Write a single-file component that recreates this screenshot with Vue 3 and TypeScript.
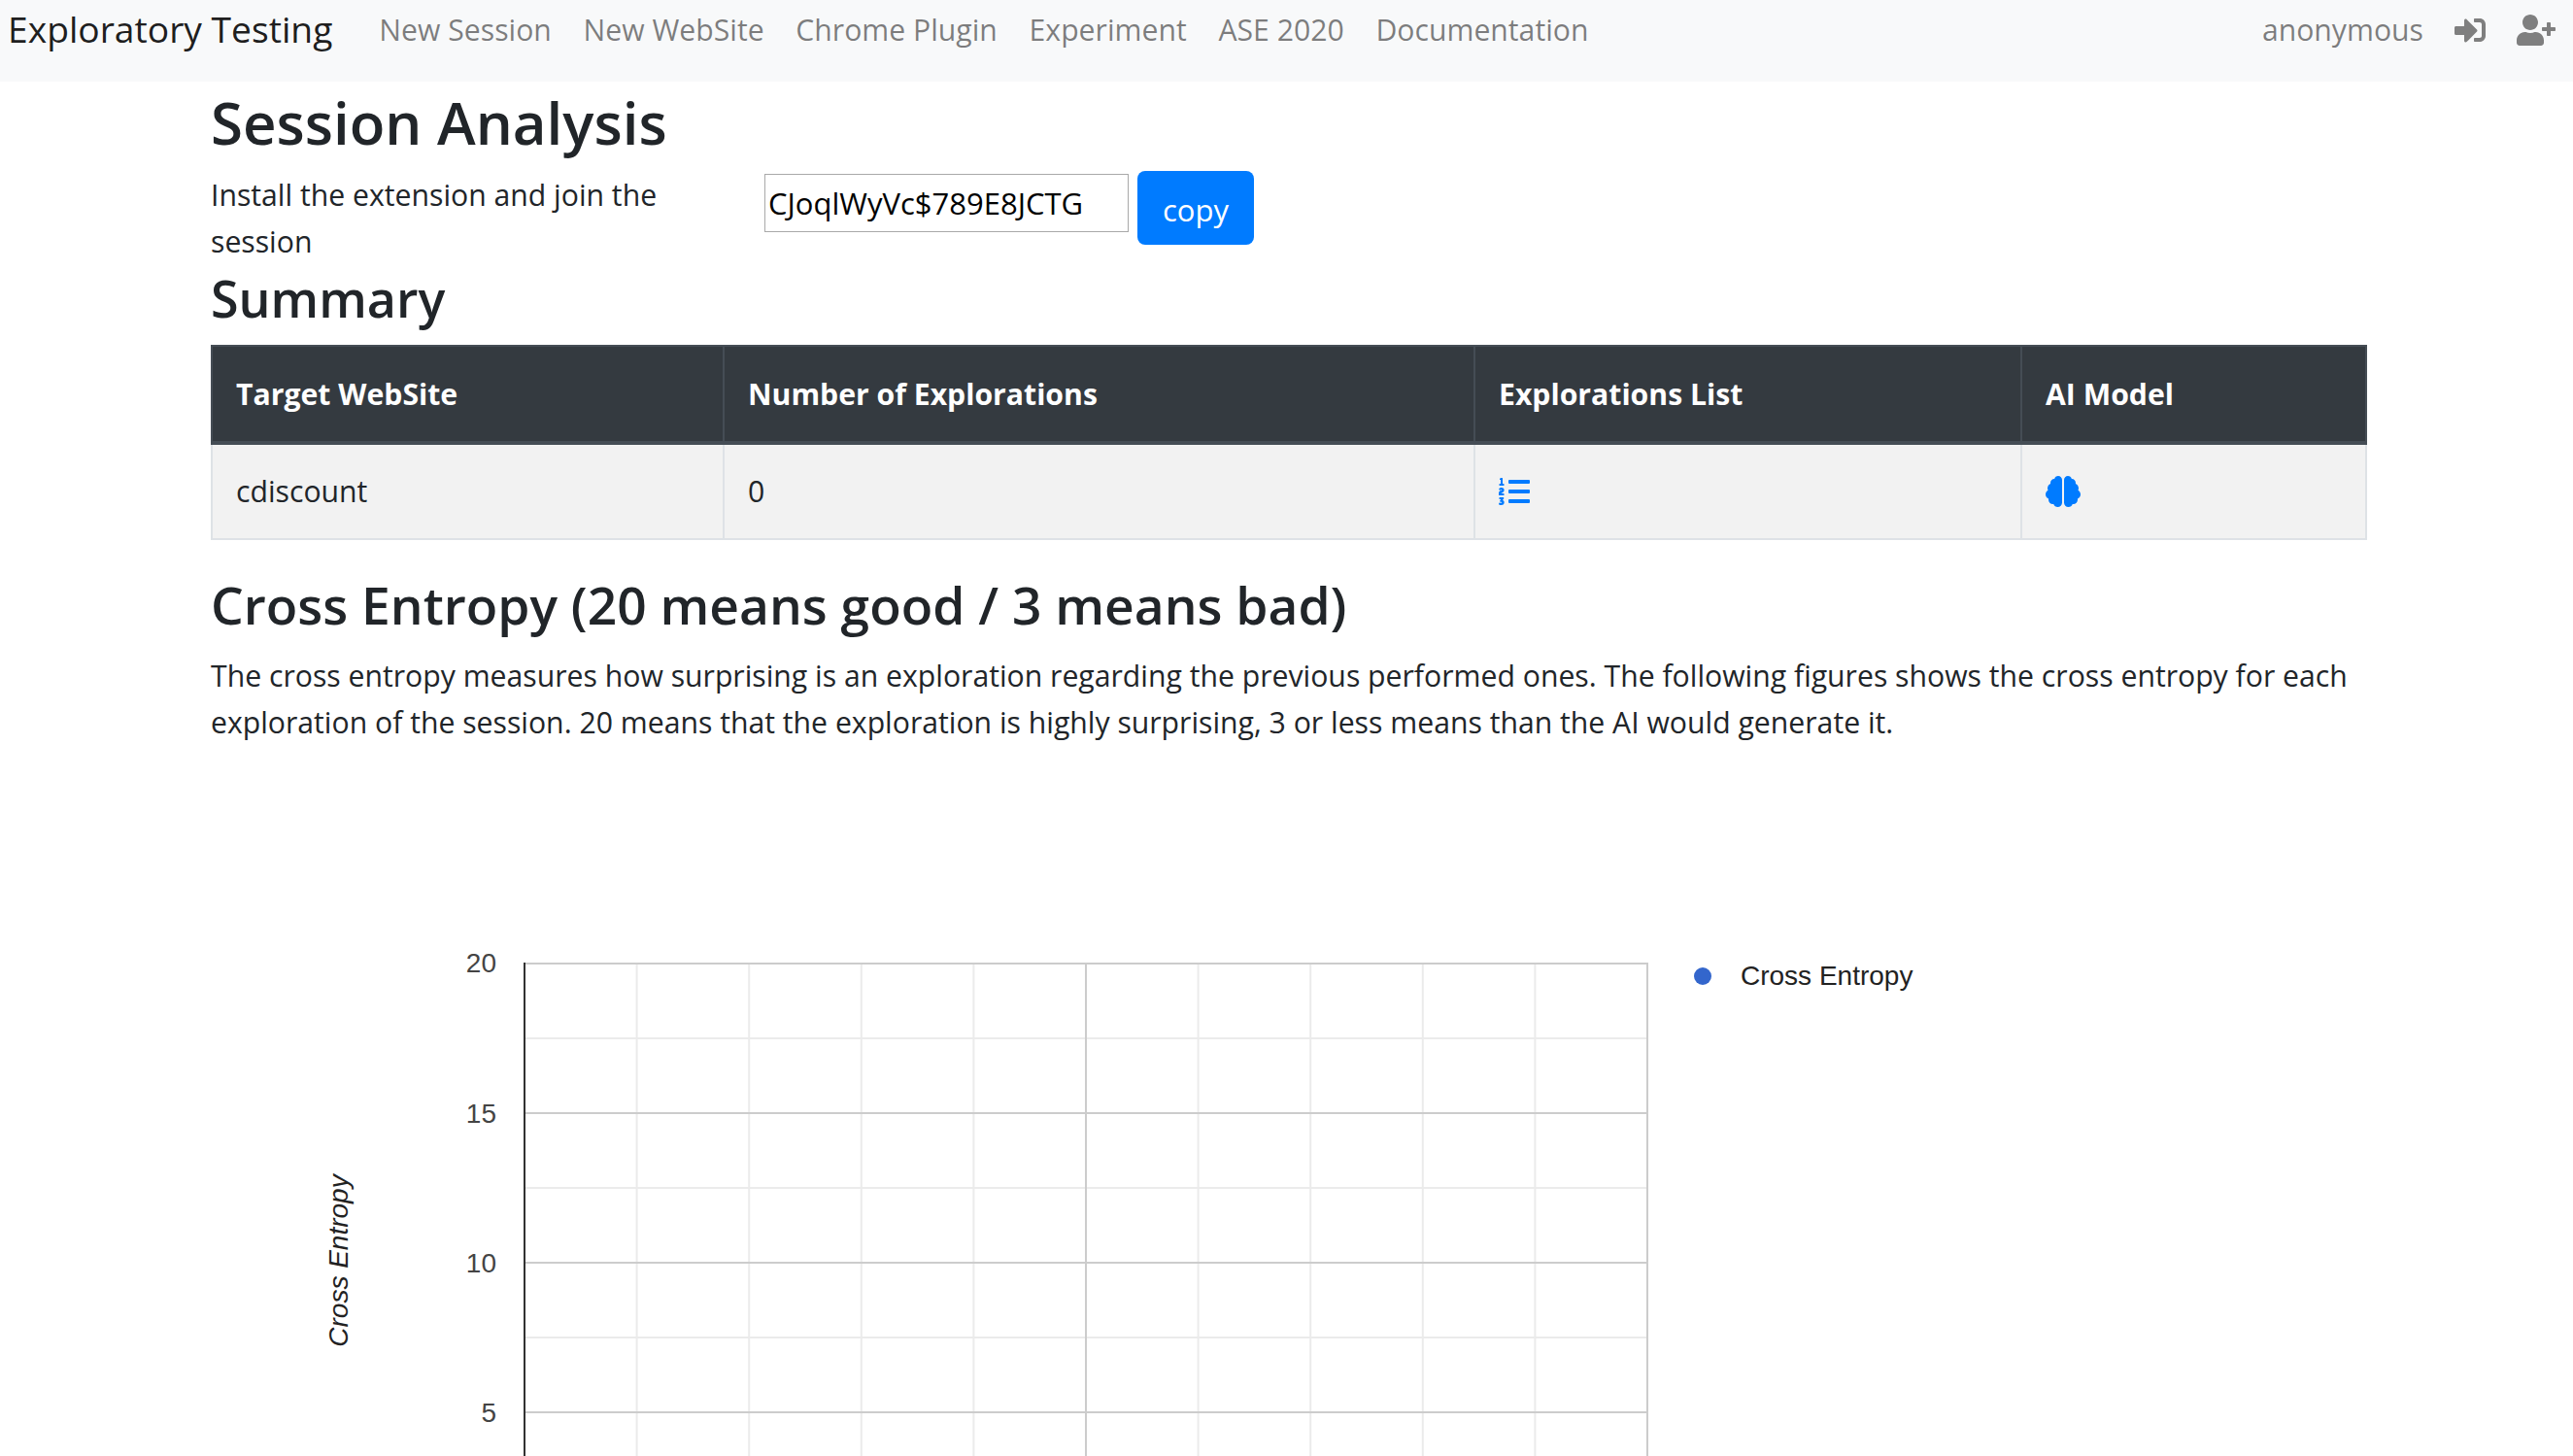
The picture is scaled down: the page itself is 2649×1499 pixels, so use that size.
<script setup lang="ts">
const navLinks = ['New Session', 'New WebSite', 'Chrome Plugin', 'Experiment', 'ASE 2020', 'Documentation']

// plot area of the chart, in svg coordinates
const plotLeft = 323
const plotRight = 1479
const plotTop = 191
const plotBottom = 699
const stepX = (plotRight - plotLeft) / 10
const stepY = 77

const verticals = Array.from({ length: 11 }, (_, i) => plotLeft + stepX * i)
const horizontals = Array.from({ length: 7 }, (_, i) => plotTop + stepY * i)
const ticks = [
  { label: '20', y: 200 },
  { label: '15', y: 355 },
  { label: '10', y: 509 },
  { label: '5', y: 663 },
]

function isMajorV(i: number) {
  return i % 5 === 0
}
</script>

<template>
  <div class="page">
    <nav class="navbar">
      <a class="brand">Exploratory Testing</a>
      <ul class="nav-links">
        <li v-for="link in navLinks" :key="link"><a>{{ link }}</a></li>
      </ul>
      <div class="nav-right">
        <span class="user">anonymous</span>
        <svg class="icon sign-in" viewBox="0 0 512 512" aria-hidden="true">
          <path d="M416 448h-84c-6.6 0-12-5.4-12-12v-40c0-6.6 5.4-12 12-12h84c17.7 0 32-14.3 32-32V160c0-17.7-14.3-32-32-32h-84c-6.6 0-12-5.4-12-12V76c0-6.6 5.4-12 12-12h84c53 0 96 43 96 96v192c0 53-43 96-96 96zm-47-201L201 79c-15-15-41-4.5-41 17v96H24c-13.3 0-24 10.7-24 24v96c0 13.3 10.7 24 24 24h136v96c0 21.5 26 32 41 17l168-168c9.3-9.4 9.3-24.6 0-34z" />
        </svg>
        <svg class="icon user-plus" viewBox="0 0 640 512" aria-hidden="true">
          <path d="M624 208h-64v-64c0-8.8-7.2-16-16-16h-32c-8.8 0-16 7.2-16 16v64h-64c-8.8 0-16 7.2-16 16v32c0 8.8 7.2 16 16 16h64v64c0 8.8 7.2 16 16 16h32c8.8 0 16-7.2 16-16v-64h64c8.8 0 16-7.2 16-16v-32c0-8.8-7.2-16-16-16zm-400 48c70.7 0 128-57.3 128-128S294.7 0 224 0 96 57.3 96 128s57.3 128 128 128zm89.6 32h-16.7c-22.2 10.2-46.9 16-72.9 16s-50.6-5.8-72.9-16h-16.7C60.2 288 0 348.2 0 422.4V464c0 26.5 21.5 48 48 48h352c26.5 0 48-21.5 48-48v-41.6c0-74.2-60.2-134.4-134.4-134.4z" />
        </svg>
      </div>
    </nav>

    <main class="container">
      <h2 class="title">Session Analysis</h2>
      <div class="join-row">
        <p class="join-text">Install the extension and join the session</p>
        <input class="session-key" type="text" value="CJoqlWyVc$789E8JCTG" />
        <button class="copy-btn" type="button">copy</button>
      </div>

      <h3 class="summary-title">Summary</h3>
      <table class="summary">
        <thead>
          <tr>
            <th class="col-site">Target WebSite</th>
            <th class="col-count">Number of Explorations</th>
            <th class="col-list">Explorations List</th>
            <th>AI Model</th>
          </tr>
        </thead>
        <tbody>
          <tr>
            <td>cdiscount</td>
            <td>0</td>
            <td>
              <svg class="cell-icon" viewBox="0 0 512 512" aria-hidden="true">
                <path d="M61.77 401l17.5-20.15a19.92 19.92 0 0 0 5.07-14.19v-3.31C84.34 356 80.5 352 73 352H16a8 8 0 0 0-8 8v16a8 8 0 0 0 8 8h22.83a157.41 157.41 0 0 0-11 12.31l-5.61 7c-4 5.07-5.25 10.13-2.8 14.88l1.05 1.93c3 5.76 6.29 7.88 12.25 7.88h4.73c10.33 0 15.94 2.44 15.94 9.09 0 4.72-4.2 8.22-14.36 8.22a41.54 41.54 0 0 1-15.47-3.12c-6.49-3.88-11.74-3.5-15.6 3.12l-5.59 9.31c-3.72 6.13-3.19 11.72 2.63 15.94 7.71 4.69 20.38 9.44 37 9.44 34.16 0 48.5-22.75 48.5-44.12-.03-14.38-9.12-29.76-28.73-34.88zM496 224H176a16 16 0 0 0-16 16v32a16 16 0 0 0 16 16h320a16 16 0 0 0 16-16v-32a16 16 0 0 0-16-16zm0-160H176a16 16 0 0 0-16 16v32a16 16 0 0 0 16 16h320a16 16 0 0 0 16-16V80a16 16 0 0 0-16-16zm0 320H176a16 16 0 0 0-16 16v32a16 16 0 0 0 16 16h320a16 16 0 0 0 16-16v-32a16 16 0 0 0-16-16zM16 160h64a8 8 0 0 0 8-8v-16a8 8 0 0 0-8-8H64V40a8 8 0 0 0-8-8H32a8 8 0 0 0-7.14 4.42l-8 16A8 8 0 0 0 24 64h8v64H16a8 8 0 0 0-8 8v16a8 8 0 0 0 8 8zm-3.91 160H80a8 8 0 0 0 8-8v-16a8 8 0 0 0-8-8H41.32c3.29-10.29 48.34-18.68 48.34-56.44 0-29.06-25-39.56-44.47-39.56-21.36 0-33.8 10-40.46 18.75-4.37 5.59-3 10.84 2.8 15.37l8.58 6.88c5.61 4.56 11 2.47 16.12-2.44a13.44 13.44 0 0 1 9.46-3.84c3.33 0 9.28 1.56 9.28 8.75C51 232 0 240.75 0 280.16v8.4A7.82 7.82 0 0 0 12.09 320z" />
              </svg>
            </td>
            <td>
              <svg class="cell-icon brain" viewBox="0 0 576 512" aria-hidden="true">
                <path d="M208 0c-29.9 0-54.7 20.5-61.8 48.2-.8 0-1.4-.2-2.2-.2-35.3 0-64 28.7-64 64 0 4.8.6 9.5 1.7 14C52.5 138 32 166.6 32 200c0 12.6 3.2 24.3 8.3 34.9C16.3 248.7 0 274.3 0 304c0 33.3 20.4 61.9 49.4 73.9-.9 4.6-1.4 9.3-1.4 14.1 0 39.8 32.2 72 72 72 4.1 0 8.1-.5 12-1.2 9.6 28.5 36.2 49.2 68 49.2 39.8 0 72-32.2 72-72V64c0-35.3-28.7-64-64-64zm368 304c0-29.7-16.3-55.3-40.3-69.1 5.2-10.6 8.3-22.3 8.3-34.9 0-33.4-20.5-62-49.7-74 1-4.5 1.7-9.2 1.7-14 0-35.3-28.7-64-64-64-.8 0-1.5.2-2.2.2C422.7 20.5 397.9 0 368 0c-35.3 0-64 28.6-64 64v376c0 39.8 32.2 72 72 72 31.8 0 58.4-20.7 68-49.2 3.9.7 7.9 1.2 12 1.2 39.8 0 72-32.2 72-72 0-4.8-.5-9.5-1.4-14.1 29-12 49.4-40.6 49.4-73.9z" />
              </svg>
            </td>
          </tr>
        </tbody>
      </table>

      <h3 class="entropy-title">Cross Entropy (20 means good / 3 means bad)</h3>
      <p class="entropy-text">
        The cross entropy measures how surprising is an exploration regarding the previous performed ones. The following figures shows the cross entropy for each exploration of the session. 20 means that the exploration is highly surprising, 3 or less means than the AI would generate it.
      </p>

      <svg class="chart" width="2220" height="699" viewBox="0 0 2220 699">
        <g v-for="(x, i) in verticals" :key="'v' + i">
          <line v-if="!isMajorV(i)" :x1="x" :x2="x" :y1="plotTop" :y2="plotBottom" stroke="#ebebeb" stroke-width="2" />
        </g>
        <g v-for="(y, i) in horizontals" :key="'h' + i">
          <line v-if="i % 2 === 1" :x1="plotLeft" :x2="plotRight" :y1="y" :y2="y" stroke="#ebebeb" stroke-width="2" />
        </g>
        <g v-for="(y, i) in horizontals" :key="'hm' + i">
          <line v-if="i % 2 === 0" :x1="plotLeft" :x2="plotRight" :y1="y" :y2="y" stroke="#cccccc" stroke-width="2" />
        </g>
        <g v-for="(x, i) in verticals" :key="'vm' + i">
          <line v-if="isMajorV(i) && i > 0" :x1="x" :x2="x" :y1="plotTop - 1" :y2="plotBottom" stroke="#cccccc" stroke-width="2" />
        </g>
        <line :x1="plotLeft" :x2="plotLeft" :y1="plotTop - 1" :y2="plotBottom" stroke="#333333" stroke-width="2" />

        <text v-for="t in ticks" :key="t.label" class="tick" x="294" :y="t.y" text-anchor="end">{{ t.label }}</text>
        <text class="axis-title" transform="translate(141 497) rotate(-90)" text-anchor="middle">Cross Entropy</text>

        <circle cx="1536" cy="204" r="9" fill="#3366cc" />
        <text class="legend" x="1575" y="213">Cross Entropy</text>
      </svg>
    </main>
  </div>
</template>

<style>
html,
body {
  overflow: hidden;
  background: #fff;
}
</style>

<style scoped>
.page {
  font-family: 'Open Sans', 'Noto Sans', sans-serif;
  font-size: 30.2px;
  line-height: 48px;
  color: #212529;
  height: 1499px;
  overflow: hidden;
}

/* Navbar */
.navbar {
  display: flex;
  align-items: flex-start;
  height: 84px;
  padding: 7px 18px 0 8px;
  box-sizing: border-box;
  background: #f8f9fa;
}

.brand {
  font-size: 37.2px;
  line-height: 46px;
  color: rgba(0, 0, 0, 0.9);
  margin-right: 48px;
}

.nav-links {
  display: flex;
  gap: 32.7px;
  margin: 0;
  padding: 0;
  list-style: none;
  color: rgba(0, 0, 0, 0.5);
}

.nav-right {
  display: flex;
  align-items: center;
  margin-left: auto;
  color: rgba(0, 0, 0, 0.5);
}

.user {
  margin-right: 32px;
}

.icon {
  display: block;
  height: 32px;
  fill: #7f7f7f;
}

.sign-in {
  width: 32px;
  margin-right: 32px;
}

.user-plus {
  width: 40px;
}

/* Content */
.container {
  display: flex;
  flex-direction: column;
  align-items: flex-start;
  width: 2220px;
  margin-left: 217px;
}

.title {
  margin: 0;
  height: 93px;
  font-size: 60px;
  font-weight: 600;
  line-height: 84px;
}

.join-row {
  display: flex;
  align-items: flex-start;
}

.join-text {
  width: 510px;
  margin: 0 60px 0 0;
}

.session-key {
  width: 375px;
  height: 60px;
  margin: 2px 9px 0 0;
  padding: 2px 3px;
  box-sizing: border-box;
  border: 1px solid #a9a9a9;
  font: inherit;
  font-size: 31px;
  line-height: normal;
  color: #000;
}

.copy-btn {
  width: 120px;
  height: 76px;
  margin-top: -1px;
  padding: 3px 0 0;
  border: 0;
  border-radius: 8px;
  background: #007bff;
  font: inherit;
  font-size: 31px;
  color: #fff;
}

.summary-title {
  margin: -2px 0 0;
  height: 84px;
  font-size: 52px;
  font-weight: 600;
  line-height: 72px;
}

/* Table */
.summary {
  width: 100%;
  border-collapse: collapse;
  table-layout: fixed;
}

.summary th,
.summary td {
  box-sizing: border-box;
  padding: 0 24px;
  text-align: left;
}

.summary th {
  height: 100px;
  background: #343a40;
  border: 2px solid #454d55;
  border-bottom-width: 4px;
  color: #fff;
  font-weight: 700;
}

.summary td {
  height: 99px;
  background: #f2f2f2;
  border: 2px solid #dee2e6;
}

.col-site {
  width: 527px;
}

.col-count {
  width: 773px;
}

.col-list {
  width: 563px;
}

.cell-icon {
  display: block;
  width: 32px;
  height: 32px;
  fill: #007bff;
}

.brain {
  width: 36px;
}

.entropy-title {
  margin: 31px 0 0;
  font-size: 53.3px;
  font-weight: 600;
  line-height: 72px;
}

.entropy-text {
  margin: 13px 0 0;
}

.chart {
  display: block;
  margin-top: 33px;
  font-family: 'Liberation Sans', Arial, sans-serif;
}

.tick {
  font-size: 28px;
  fill: #444;
}

.axis-title {
  font-size: 28px;
  font-style: italic;
  fill: #222;
}

.legend {
  font-size: 28px;
  fill: #222;
}
</style>
